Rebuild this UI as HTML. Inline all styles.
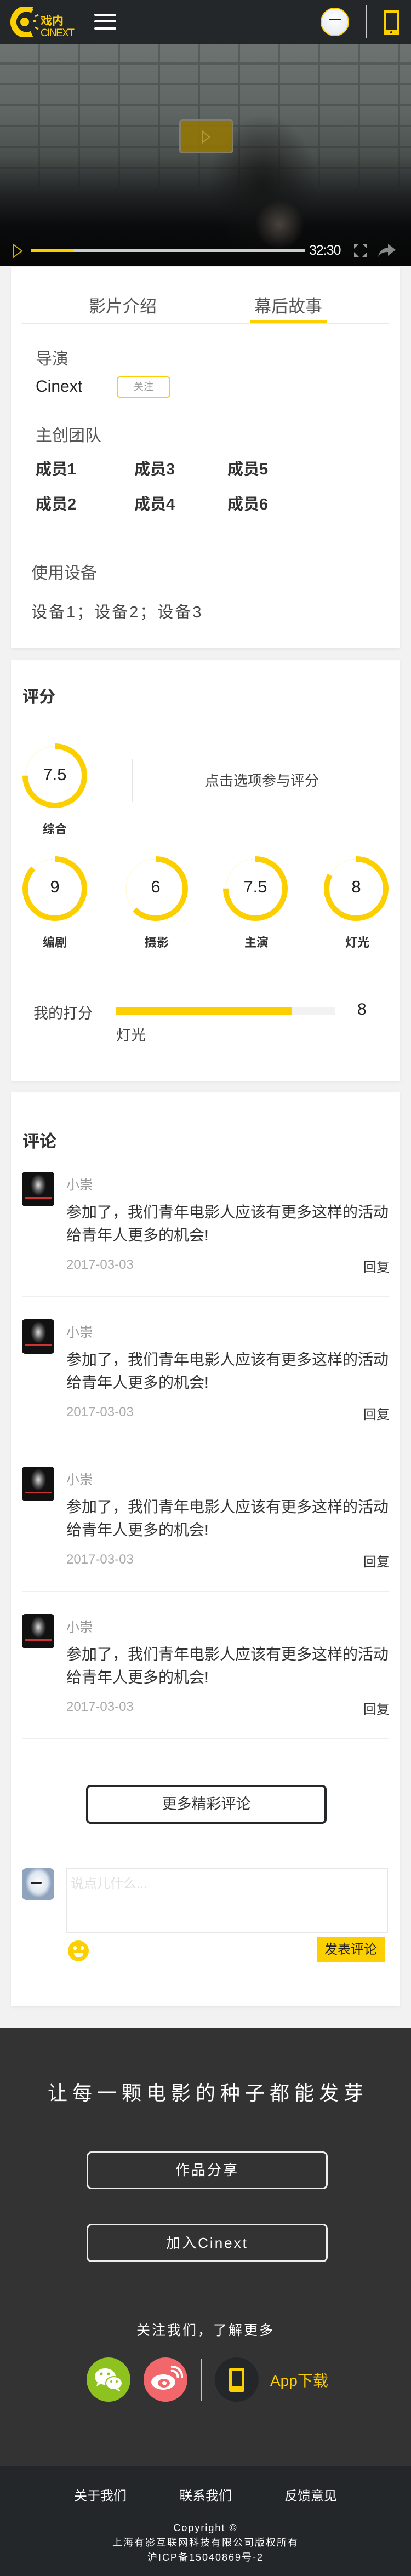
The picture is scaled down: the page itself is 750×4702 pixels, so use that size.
<!DOCTYPE html>
<html><head><meta charset="utf-8">
<style>
*{margin:0;padding:0;box-sizing:border-box}
body{width:750px;height:4702px;background:#f2f2f2;font-family:"Liberation Sans","Noto Sans CJK SC",sans-serif;color:#333;position:relative;overflow:hidden}
.a{position:absolute;white-space:nowrap}
.card{position:absolute;left:20px;width:710px;background:#fff;box-shadow:0 2px 6px rgba(0,0,0,.06)}
.hr{position:absolute;height:1px;background:#e8e8e8}
.c{position:absolute;text-align:center}
</style></head><body>
<!-- header -->
<div class="a" style="left:0;top:0;width:750px;height:80px;background:#23272a"></div>
<svg class="a" style="left:18px;top:12px" width="120" height="56" viewBox="0 0 120 56">
<path d="M40 6 A24 24 0 1 0 40 50" fill="none" stroke="#fcd000" stroke-width="11"/>
<circle cx="27" cy="28" r="8" fill="#fcd000"/>
<rect x="42" y="25" width="5" height="4" fill="#fcd000"/>
<path d="M38 10 l4 -6 M46 18 l6 -3 M46 38 l6 3" stroke="#fcd000" stroke-width="3"/>
<text x="56" y="33" font-size="21" font-weight="bold" fill="#fcd000" font-family="Noto Sans CJK SC">戏内</text>
<text x="56" y="54" font-size="19" fill="#fcd000" font-family="Liberation Sans" textLength="62">CINEXT</text>
</svg>
<div class="a" style="left:172px;top:25px;width:40px;height:4px;background:#fff;border-radius:2px"></div>
<div class="a" style="left:172px;top:37px;width:40px;height:4px;background:#fff;border-radius:2px"></div>
<div class="a" style="left:172px;top:50px;width:40px;height:4px;background:#fff;border-radius:2px"></div>
<div class="a" style="left:585px;top:14px;width:52px;height:52px;border-radius:50%;background:radial-gradient(circle at 50% 40%,#fff,#dfe6ee);border:2px solid #fcd000"></div>
<div class="a" style="left:600px;top:34px;width:22px;height:3px;background:#222;border-radius:2px"></div>
<div class="a" style="left:667px;top:10px;width:3px;height:60px;background:#ccc"></div>
<div class="a" style="left:700px;top:18px;width:29px;height:46px;background:#fcd000;border-radius:2px"></div>
<div class="a" style="left:704px;top:24px;width:21px;height:30px;background:#23272a"></div>
<div class="a" style="left:712px;top:57px;width:4px;height:4px;background:#23272a;border-radius:50%"></div>
<!-- video -->
<div class="a" style="left:0;top:80px;width:750px;height:406px;background:linear-gradient(180deg,#6c7370 0%,#5f6663 30%,#4a504e 50%,#202324 68%,#0a0b0c 82%,#060606 100%)"></div>
<div class="a" style="left:0;top:80px;width:750px;height:260px;opacity:.25;background:repeating-linear-gradient(180deg,transparent 0 34px,#222 34px 38px),repeating-linear-gradient(90deg,transparent 0 70px,#222 70px 73px)"></div>
<div class="a" style="left:0;top:80px;width:750px;height:406px;background:radial-gradient(ellipse 100px 130px at 480px 260px,rgba(20,20,20,.85),rgba(0,0,0,0))"></div>
<div class="a" style="left:0;top:80px;width:750px;height:406px;background:radial-gradient(ellipse 45px 45px at 510px 330px,rgba(110,100,90,.6),rgba(0,0,0,0))"></div>
<div class="a" style="left:327px;top:218px;width:99px;height:62px;background:rgba(150,120,0,.85);border:3px solid rgba(130,130,130,.8);border-radius:6px"></div>
<svg class="a" style="left:368px;top:238px" width="16" height="24"><path d="M2 2 L14 12 L2 22 Z" fill="none" stroke="#b39a3a" stroke-width="2"/></svg>
<svg class="a" style="left:22px;top:444px" width="20" height="28"><path d="M2 2 L18 14 L2 26 Z" fill="none" stroke="#d4b000" stroke-width="2"/></svg>
<div class="a" style="left:56px;top:455px;width:500px;height:5px;background:#ccc"></div>
<div class="a" style="left:56px;top:455px;width:78px;height:5px;background:#fcd000"></div>
<div class="a" style="left:564px;top:443px;font-size:25px;color:#fff;letter-spacing:-1px">32:30</div>
<svg class="a" style="left:646px;top:445px" width="24" height="24"><path d="M0 0h9l-9 9z M24 0h-9l9 9z M0 24h9l-9-9z M24 24h-9l9-9z" fill="#999"/></svg>
<svg class="a" style="left:690px;top:445px" width="32" height="24"><path d="M18 0 L32 11 L18 22 V15 C10 15 4 17 0 24 C2 14 8 8 18 7 Z" fill="#888"/></svg>
<!-- card 1 -->
<div class="card" style="top:488px;height:695px"></div>
<div class="c" style="left:144px;width:160px;top:534px;font-size:31px;color:#555">影片介绍</div>
<div class="c" style="left:446px;width:160px;top:534px;font-size:31px;color:#555">幕后故事</div>
<div class="hr" style="left:40px;width:670px;top:590px"></div>
<div class="a" style="left:456px;top:585px;width:140px;height:5px;background:#fcd000"></div>
<div class="a" style="left:65px;top:630px;font-size:30px;color:#555">导演</div>
<div class="a" style="left:65px;top:689px;font-size:30px;color:#222">Cinext</div>
<div class="a" style="left:213px;top:687px;width:98px;height:39px;border:2px solid #fcd000;border-radius:6px;font-size:18px;color:#999;text-align:center;line-height:35px">关注</div>
<div class="a" style="left:65px;top:770px;font-size:30px;color:#555">主创团队</div>
<div class="a" style="left:65px;top:833px;font-size:29px;font-weight:bold;color:#333">成员1</div>
<div class="a" style="left:245px;top:833px;font-size:29px;font-weight:bold;color:#333">成员3</div>
<div class="a" style="left:415px;top:833px;font-size:29px;font-weight:bold;color:#333">成员5</div>
<div class="a" style="left:65px;top:897px;font-size:29px;font-weight:bold;color:#333">成员2</div>
<div class="a" style="left:245px;top:897px;font-size:29px;font-weight:bold;color:#333">成员4</div>
<div class="a" style="left:415px;top:897px;font-size:29px;font-weight:bold;color:#333">成员6</div>
<div class="hr" style="left:40px;width:670px;top:976px"></div>
<div class="a" style="left:57px;top:1021px;font-size:30px;color:#555">使用设备</div>
<div class="a" style="left:57px;top:1094px;font-size:29px;color:#444;letter-spacing:3px">设备1；设备2；设备3</div>
<!-- card 2 scores -->
<div class="card" style="top:1204px;height:769px"></div>
<div class="a" style="left:41px;top:1247px;font-size:30px;font-weight:bold;color:#333">评分</div>
<svg class="a" style="left:0;top:1340px" width="750" height="360">
<g fill="none" stroke-width="10">
<circle cx="100" cy="76" r="54" stroke="#fff6cc" stroke-width="1"/>
<circle cx="100" cy="76" r="54" stroke="#fcd000" stroke-dasharray="254.5 400" transform="rotate(-90 100 76)"/>
<circle cx="100" cy="282" r="54" stroke="#fff6cc" stroke-width="1"/>
<circle cx="100" cy="282" r="54" stroke="#fcd000" stroke-dasharray="295 400" transform="rotate(-90 100 282)"/>
<circle cx="284" cy="282" r="54" stroke="#fff6cc" stroke-width="1"/>
<circle cx="284" cy="282" r="54" stroke="#fcd000" stroke-dasharray="212 400" transform="rotate(-90 284 282)"/>
<circle cx="466" cy="282" r="54" stroke="#fff6cc" stroke-width="1"/>
<circle cx="466" cy="282" r="54" stroke="#fcd000" stroke-dasharray="254.5 400" transform="rotate(-90 466 282)"/>
<circle cx="650" cy="282" r="54" stroke="#fff6cc" stroke-width="1"/>
<circle cx="650" cy="282" r="54" stroke="#fcd000" stroke-dasharray="280 400" transform="rotate(-90 650 282)"/>
</g>
</svg>
<div class="c" style="left:50px;width:100px;top:1396px;font-size:31px;color:#222">7.5</div>
<div class="c" style="left:50px;width:100px;top:1496px;font-size:22px;font-weight:bold;color:#333">综合</div>
<div class="a" style="left:240px;top:1385px;width:2px;height:79px;background:#e5e5e5"></div>
<div class="c" style="left:300px;width:356px;top:1405px;font-size:26px;color:#444">点击选项参与评分</div>
<div class="c" style="left:50px;width:100px;top:1601px;font-size:31px;color:#222">9</div>
<div class="c" style="left:234px;width:100px;top:1601px;font-size:31px;color:#222">6</div>
<div class="c" style="left:416px;width:100px;top:1601px;font-size:31px;color:#222">7.5</div>
<div class="c" style="left:600px;width:100px;top:1601px;font-size:31px;color:#222">8</div>
<div class="c" style="left:50px;width:100px;top:1703px;font-size:22px;font-weight:bold;color:#333">编剧</div>
<div class="c" style="left:236px;width:100px;top:1703px;font-size:22px;font-weight:bold;color:#333">摄影</div>
<div class="c" style="left:418px;width:100px;top:1703px;font-size:22px;font-weight:bold;color:#333">主演</div>
<div class="c" style="left:602px;width:100px;top:1703px;font-size:22px;font-weight:bold;color:#333">灯光</div>
<div class="a" style="left:61px;top:1828px;font-size:27px;color:#444">我的打分</div>
<div class="a" style="left:212px;top:1838px;width:400px;height:14px;background:#f2f2f2"></div>
<div class="a" style="left:212px;top:1838px;width:320px;height:14px;background:#fcd000"></div>
<div class="a" style="left:652px;top:1826px;font-size:30px;color:#222">8</div>
<div class="a" style="left:212px;top:1868px;font-size:27px;color:#444">灯光</div>
<!-- comments card -->
<div class="card" style="top:1994px;height:1668px"></div>
<div class="hr" style="left:40px;width:665px;top:2035px;background:#eee"></div>
<div class="a" style="left:41px;top:2058px;font-size:31px;font-weight:bold;color:#333">评论</div>

<div style="position:absolute;left:0;top:2139px;width:750px;height:269px">
<div class="a" style="left:40px;top:0;width:59px;height:63px;border-radius:6px;background:radial-gradient(ellipse 14px 20px at 30px 24px,#ddd,#555 60%,#111);"></div>
<div class="a" style="left:45px;top:46px;width:49px;height:3px;background:#c33"></div>
<div class="a" style="left:121px;top:4px;font-size:24px;color:#999">小崇</div>
<div class="a" style="left:121px;top:53px;font-size:28px;color:#333;line-height:42px;white-space:normal;width:600px">参加了，我们青年电影人应该有更多这样的活动给青年人更多的机会!</div>
<div class="a" style="left:121px;top:156px;font-size:24px;color:#aaa">2017-03-03</div>
<div class="a" style="left:663px;top:154px;font-size:24px;color:#333">回复</div>
<div class="hr" style="left:40px;width:670px;top:227px;background:#eee"></div>
</div>
<div style="position:absolute;left:0;top:2408px;width:750px;height:269px">
<div class="a" style="left:40px;top:0;width:59px;height:63px;border-radius:6px;background:radial-gradient(ellipse 14px 20px at 30px 24px,#ddd,#555 60%,#111);"></div>
<div class="a" style="left:45px;top:46px;width:49px;height:3px;background:#c33"></div>
<div class="a" style="left:121px;top:4px;font-size:24px;color:#999">小崇</div>
<div class="a" style="left:121px;top:53px;font-size:28px;color:#333;line-height:42px;white-space:normal;width:600px">参加了，我们青年电影人应该有更多这样的活动给青年人更多的机会!</div>
<div class="a" style="left:121px;top:156px;font-size:24px;color:#aaa">2017-03-03</div>
<div class="a" style="left:663px;top:154px;font-size:24px;color:#333">回复</div>
<div class="hr" style="left:40px;width:670px;top:227px;background:#eee"></div>
</div>
<div style="position:absolute;left:0;top:2677px;width:750px;height:269px">
<div class="a" style="left:40px;top:0;width:59px;height:63px;border-radius:6px;background:radial-gradient(ellipse 14px 20px at 30px 24px,#ddd,#555 60%,#111);"></div>
<div class="a" style="left:45px;top:46px;width:49px;height:3px;background:#c33"></div>
<div class="a" style="left:121px;top:4px;font-size:24px;color:#999">小崇</div>
<div class="a" style="left:121px;top:53px;font-size:28px;color:#333;line-height:42px;white-space:normal;width:600px">参加了，我们青年电影人应该有更多这样的活动给青年人更多的机会!</div>
<div class="a" style="left:121px;top:156px;font-size:24px;color:#aaa">2017-03-03</div>
<div class="a" style="left:663px;top:154px;font-size:24px;color:#333">回复</div>
<div class="hr" style="left:40px;width:670px;top:227px;background:#eee"></div>
</div>
<div style="position:absolute;left:0;top:2946px;width:750px;height:269px">
<div class="a" style="left:40px;top:0;width:59px;height:63px;border-radius:6px;background:radial-gradient(ellipse 14px 20px at 30px 24px,#ddd,#555 60%,#111);"></div>
<div class="a" style="left:45px;top:46px;width:49px;height:3px;background:#c33"></div>
<div class="a" style="left:121px;top:4px;font-size:24px;color:#999">小崇</div>
<div class="a" style="left:121px;top:53px;font-size:28px;color:#333;line-height:42px;white-space:normal;width:600px">参加了，我们青年电影人应该有更多这样的活动给青年人更多的机会!</div>
<div class="a" style="left:121px;top:156px;font-size:24px;color:#aaa">2017-03-03</div>
<div class="a" style="left:663px;top:154px;font-size:24px;color:#333">回复</div>
<div class="hr" style="left:40px;width:670px;top:227px;background:#eee"></div>
</div>

<div class="a" style="left:157px;top:3258px;width:439px;height:71px;border:4px solid #23272a;border-radius:8px;text-align:center;line-height:63px;font-size:27px;color:#333">更多精彩评论</div>
<div class="a" style="left:40px;top:3410px;width:59px;height:58px;border-radius:8px;background:radial-gradient(ellipse 24px 28px at 30px 26px,#fff,#dbe4ee 70%,#8fa3bd)"></div>
<div class="a" style="left:56px;top:3435px;width:20px;height:3px;background:#222;border-radius:2px"></div>
<div class="a" style="left:121px;top:3410px;width:587px;height:119px;border:2px solid #e6e6e6"></div>
<div class="a" style="left:129px;top:3418px;font-size:24px;color:#e0e0e0">说点儿什么...</div>
<div class="a" style="left:124px;top:3542px;width:38px;height:38px;border-radius:50%;background:#fcd000"></div>
<div class="a" style="left:134px;top:3552px;width:6px;height:8px;border-radius:50%;background:#fff"></div>
<div class="a" style="left:147px;top:3552px;width:6px;height:8px;border-radius:50%;background:#fff"></div>
<div class="a" style="left:135px;top:3565px;width:17px;height:8px;border-radius:0 0 9px 9px;background:#fff"></div>
<div class="a" style="left:578px;top:3536px;width:124px;height:46px;background:#fcd000;text-align:center;line-height:46px;font-size:24px;color:#222">发表评论</div>
<!-- dark footer -->
<div class="a" style="left:0;top:3702px;width:750px;height:800px;background:#333"></div>
<div class="c" style="left:0;width:750px;top:3792px;font-size:36px;color:#fff;letter-spacing:9px;padding-left:9px">让每一颗电影的种子都能发芽</div>
<div class="a" style="left:158px;top:3927px;width:440px;height:69px;border:3px solid #eee;border-radius:9px;text-align:center;line-height:63px;font-size:26px;color:#fff;letter-spacing:3px">作品分享</div>
<div class="a" style="left:158px;top:4059px;width:440px;height:70px;border:3px solid #eee;border-radius:9px;text-align:center;line-height:64px;font-size:26px;color:#fff;letter-spacing:3px">加入Cinext</div>
<div class="c" style="left:0;width:750px;top:4234px;font-size:25px;color:#fff;letter-spacing:3px">关注我们，了解更多</div>
<div class="a" style="left:158px;top:4303px;width:80px;height:81px;border-radius:50%;background:#8dc21f"></div>
<svg class="a" style="left:168px;top:4320px" width="62" height="48"><ellipse cx="24" cy="18" rx="19" ry="15" fill="#fff"/><path d="M10 28 l-2 8 8-5z" fill="#fff"/><ellipse cx="40" cy="30" rx="15" ry="12" fill="#fff" stroke="#8dc21f" stroke-width="2"/><path d="M48 39 l4 6 -9-3z" fill="#fff"/><circle cx="17" cy="13" r="2.5" fill="#8dc21f"/><circle cx="30" cy="13" r="2.5" fill="#8dc21f"/><circle cx="35" cy="27" r="2" fill="#8dc21f"/><circle cx="45" cy="27" r="2" fill="#8dc21f"/></svg>
<div class="a" style="left:262px;top:4303px;width:80px;height:81px;border-radius:50%;background:#f2676b"></div>
<svg class="a" style="left:272px;top:4318px" width="62" height="50"><ellipse cx="26" cy="30" rx="22" ry="14" fill="#fff"/><ellipse cx="27" cy="32" rx="11" ry="8" fill="#f2676b"/><circle cx="28" cy="32" r="4" fill="#fff"/><path d="M40 10 a10 10 0 0 1 12 12" stroke="#fff" stroke-width="4" fill="none"/><path d="M40 2 a18 18 0 0 1 20 20" stroke="#fff" stroke-width="4" fill="none"/></svg>
<div class="a" style="left:366px;top:4305px;width:2px;height:78px;background:#fcd000"></div>
<div class="a" style="left:392px;top:4303px;width:80px;height:81px;border-radius:50%;background:#23272a"></div>
<div class="a" style="left:418px;top:4322px;width:28px;height:44px;background:#fcd000;border-radius:3px"></div>
<div class="a" style="left:423px;top:4328px;width:18px;height:28px;background:#23272a"></div>
<div class="a" style="left:493px;top:4324px;font-size:28px;color:#fcd000">App下载</div>
<div class="a" style="left:0;top:4502px;width:750px;height:200px;background:#23272a"></div>
<div class="c" style="left:103px;width:160px;top:4536px;font-size:24px;color:#fff">关于我们</div>
<div class="c" style="left:295px;width:160px;top:4536px;font-size:24px;color:#fff">联系我们</div>
<div class="c" style="left:487px;width:160px;top:4536px;font-size:24px;color:#fff">反馈意见</div>
<div class="c" style="left:0;width:750px;top:4601px;font-size:18px;color:#fff;letter-spacing:2px;line-height:27px">Copyright ©<br>上海有影互联网科技有限公司版权所有<br>沪ICP备15040869号-2</div>
</body></html>
